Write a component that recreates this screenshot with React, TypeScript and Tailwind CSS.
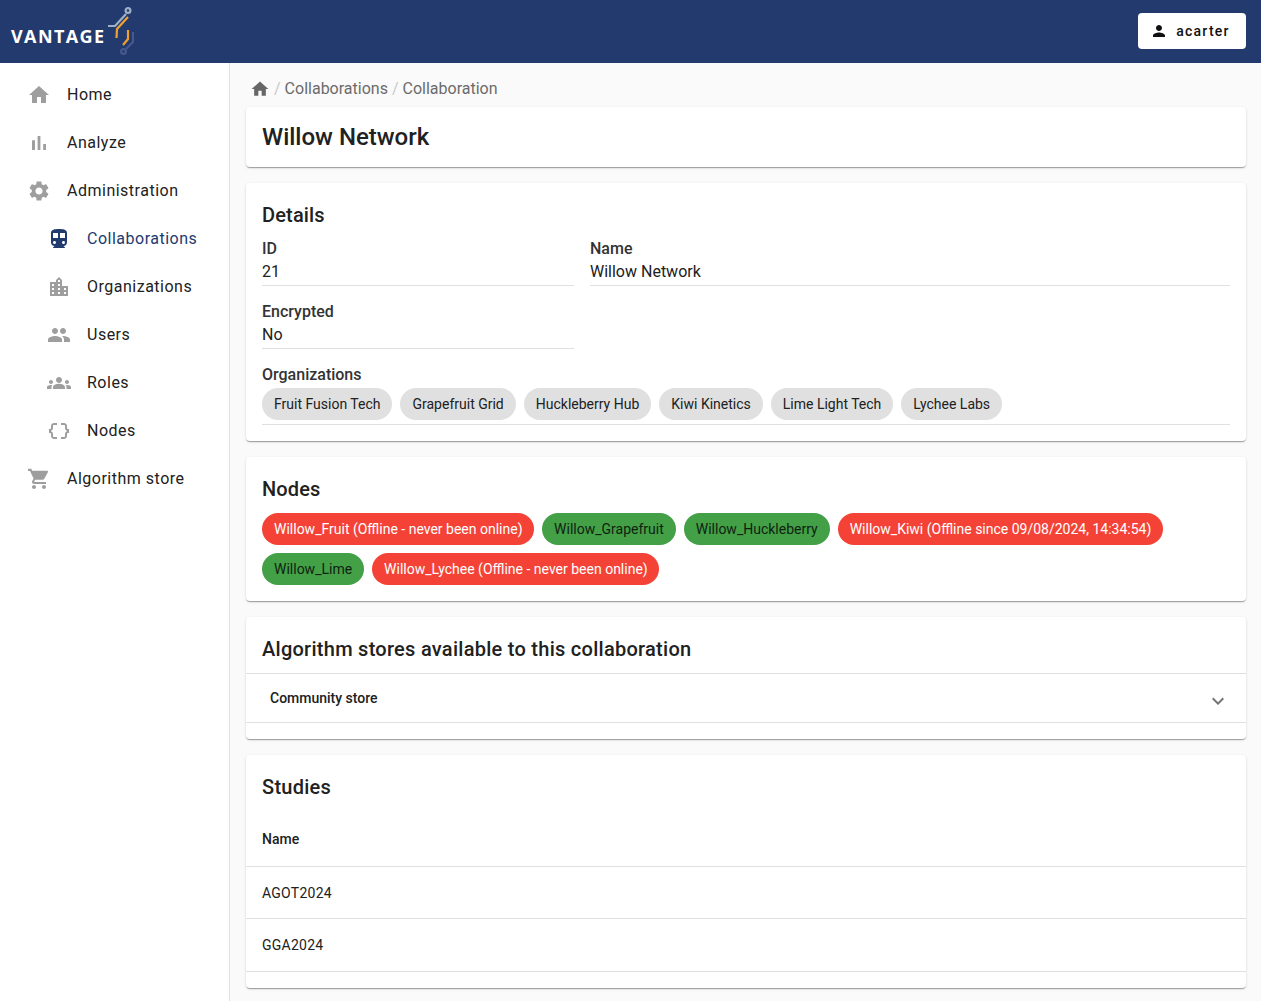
import React from "react";

const P = {
  home: "M10 20v-6h4v6h5v-8h3L12 3 2 12h3v8z",
  bar: "M5 9.2h3V19H5zM10.6 5h2.8v14h-2.8zm5.6 8H19v6h-2.8z",
  gear: "M19.14 12.94c.04-.3.06-.61.06-.94 0-.32-.02-.64-.07-.94l2.03-1.58c.18-.14.23-.41.12-.61l-1.92-3.32c-.12-.22-.37-.29-.59-.22l-2.39.96c-.5-.38-1.03-.7-1.62-.94l-.36-2.54c-.04-.24-.24-.41-.48-.41h-3.84c-.24 0-.43.17-.47.41l-.36 2.54c-.59.24-1.13.57-1.62.94l-2.39-.96c-.22-.08-.47 0-.59.22L2.74 8.87c-.12.21-.08.47.12.61l2.03 1.58c-.05.3-.09.63-.09.94s.02.64.07.94l-2.03 1.58c-.18.14-.23.41-.12.61l1.92 3.32c.12.22.37.29.59.22l2.39-.96c.5.38 1.03.7 1.62.94l.36 2.54c.05.24.24.41.48.41h3.84c.24 0 .44-.17.47-.41l.36-2.54c.59-.24 1.13-.56 1.62-.94l2.39.96c.22.08.47 0 .59-.22l1.92-3.32c.12-.22.07-.47-.12-.61l-2.01-1.58zM12 15.6c-1.98 0-3.6-1.62-3.6-3.6s1.62-3.6 3.6-3.6 3.6 1.62 3.6 3.6-1.62 3.6-3.6 3.6z",
  train: "M12 2c-4.42 0-8 .5-8 4v9.5C4 17.43 5.57 19 7.5 19L6 20.5v.5h12v-.5L16.5 19c1.93 0 3.5-1.57 3.5-3.5V6c0-3.5-3.58-4-8-4zM7.5 17c-.83 0-1.5-.67-1.5-1.5S6.67 14 7.5 14s1.5.67 1.5 1.5S8.33 17 7.5 17zm3.5-6H6V6h5v5zm5.5 6c-.83 0-1.5-.67-1.5-1.5s.67-1.5 1.5-1.5 1.5.67 1.5 1.5-.67 1.5-1.5 1.5zm1.5-6h-5V6h5v5z",
  city: "M15 11V5l-3-3-3 3v2H3v14h18V11h-6zm-8 8H5v-2h2v2zm0-4H5v-2h2v2zm0-4H5V9h2v2zm6 8h-2v-2h2v2zm0-4h-2v-2h2v2zm0-4h-2V9h2v2zm0-4h-2V5h2v2zm6 12h-2v-2h2v2zm0-4h-2v-2h2v2z",
  people: "M16 11c1.66 0 2.99-1.34 2.99-3S17.66 5 16 5c-1.66 0-3 1.34-3 3s1.34 3 3 3zm-8 0c1.66 0 2.99-1.34 2.99-3S9.66 5 8 5C6.34 5 5 6.34 5 8s1.34 3 3 3zm0 2c-2.33 0-7 1.17-7 3.5V19h14v-2.5c0-2.33-4.67-3.5-7-3.5zm8 0c-.29 0-.62.02-.97.05 1.16.84 1.97 1.97 1.97 3.45V19h6v-2.5c0-2.33-4.67-3.5-7-3.5z",
  groups: "M12 12.75c1.63 0 3.07.39 4.24.9 1.08.48 1.76 1.56 1.76 2.73V18H6v-1.61c0-1.18.68-2.26 1.76-2.73 1.17-.52 2.61-.91 4.24-.91zM4 13c1.1 0 2-.9 2-2s-.9-2-2-2-2 .9-2 2 .9 2 2 2zm1.13 1.1c-.37-.06-.74-.1-1.13-.1-.99 0-1.93.21-2.78.58C.48 14.9 0 15.62 0 16.43V18h4.5v-1.61c0-.83.23-1.61.63-2.29zM20 13c1.1 0 2-.9 2-2s-.9-2-2-2-2 .9-2 2 .9 2 2 2zm4 3.43c0-.81-.48-1.53-1.22-1.85-.85-.37-1.79-.58-2.78-.58-.39 0-.76.04-1.13.1.4.68.63 1.46.63 2.29V18H24v-1.57zM12 6c1.66 0 3 1.34 3 3s-1.34 3-3 3-3-1.34-3-3 1.34-3 3-3z",
  braces: "M4 7v2c0 .55-.45 1-1 1H2v4h1c.55 0 1 .45 1 1v2c0 1.65 1.35 3 3 3h3v-2H7c-.55 0-1-.45-1-1v-2c0-1.3-.84-2.42-2-2.83v-.34C5.16 11.42 6 10.3 6 9V7c0-.55.45-1 1-1h3V4H7C5.35 4 4 5.35 4 7zm17 3c-.55 0-1-.45-1-1V7c0-1.65-1.35-3-3-3h-3v2h3c.55 0 1 .45 1 1v2c0 1.3.84 2.42 2 2.83v.34c-1.16.41-2 1.52-2 2.83v2c0 .55-.45 1-1 1h-3v2h3c1.65 0 3-1.35 3-3v-2c0-.55.45-1 1-1h1v-4h-1z",
  cart: "M7 18c-1.1 0-1.99.9-1.99 2S5.9 22 7 22s2-.9 2-2-.9-2-2-2zM1 2v2h2l3.6 7.59-1.35 2.45c-.16.28-.25.61-.25.96 0 1.1.9 2 2 2h12v-2H7.42c-.14 0-.25-.11-.25-.25l.03-.12.9-1.83h7.45c.75 0 1.41-.41 1.75-1.03l3.58-6.49c.08-.14.12-.31.12-.48 0-.55-.45-1-1-1H5.21l-.94-2H1zm16 16c-1.1 0-1.99.9-1.99 2s.89 2 1.99 2 2-.9 2-2-.9-2-2-2z",
  person: "M12 12c2.21 0 4-1.79 4-4s-1.79-4-4-4-4 1.79-4 4 1.79 4 4 4zm0 2c-2.67 0-8 1.34-8 4v2h16v-2c0-2.66-5.33-4-8-4z",
  expand: "M16.59 8.59 12 13.17 7.41 8.59 6 10l6 6 6-6z",
};

function Icon({ d, className }: { d: string; className: string }) {
  return (
    <svg viewBox="0 0 24 24" fill="currentColor" className={className}>
      <path d={d} />
    </svg>
  );
}

function NavItem({ icon, label, sub, active }: { icon: string; label: string; sub?: boolean; active?: boolean }) {
  return (
    <div className={`flex h-12 items-center ${sub ? "pl-[47px]" : "pl-[27px]"}`}>
      <Icon d={icon} className={`h-6 w-6 shrink-0 ${active ? "text-[#213a70]" : "text-[#9e9e9e]"}`} />
      <span className={`ml-4 text-base tracking-[0.5px] ${active ? "text-[#213a70]" : "text-[#212121]"}`}>{label}</span>
    </div>
  );
}

function Card({ className, children }: { className?: string; children: React.ReactNode }) {
  return (
    <section className={`rounded bg-white shadow-[0_2px_1px_-1px_rgba(0,0,0,0.2),0_1px_1px_0_rgba(0,0,0,0.14),0_1px_3px_0_rgba(0,0,0,0.12)] ${className ?? ""}`}>
      {children}
    </section>
  );
}

function Field({ label, value }: { label: string; value: string }) {
  return (
    <div className="border-b border-[#e0e0e0] pb-[2px]">
      <div className="h-[24px] text-base leading-[24px] font-medium text-[#333333]">{label}</div>
      <div className="h-[22px] text-base leading-[22px] text-[#212121]">{value}</div>
    </div>
  );
}

function Chip({ label, tone }: { label: string; tone: "grey" | "red" | "green" }) {
  const c =
    tone === "grey"
      ? "bg-[#e0e0e0] text-[#212121] pr-3"
      : tone === "red"
        ? "bg-[#f44336] text-white pr-[11.5px]"
        : "bg-[#43a047] text-[#0f1f10] pr-3";
  return <span className={`flex h-8 items-center rounded-full pl-3 text-sm whitespace-nowrap ${c}`}>{label}</span>;
}

const orgs = ["Fruit Fusion Tech", "Grapefruit Grid", "Huckleberry Hub", "Kiwi Kinetics", "Lime Light Tech", "Lychee Labs"];
const nodes: [string, "red" | "green"][] = [
  ["Willow_Fruit (Offline - never been online)", "red"],
  ["Willow_Grapefruit", "green"],
  ["Willow_Huckleberry", "green"],
  ["Willow_Kiwi (Offline since 09/08/2024, 14:34:54)", "red"],
  ["Willow_Lime", "green"],
  ["Willow_Lychee (Offline - never been online)", "red"],
];

export default function App() {
  return (
    <div className="flex h-screen flex-col overflow-hidden bg-[#fafafa] font-['Roboto',sans-serif] text-[#212121]">
      <header className="flex h-[63px] shrink-0 items-start justify-between bg-[#223a6e] pr-[15px] pl-[11px]">
        <div className="flex items-start pt-[5px]">
          <span className="mt-[18px] w-[95px] font-['Open_Sans',sans-serif] text-[18px] leading-[26px] font-bold tracking-[1.4px] whitespace-nowrap text-white">VANTAGE</span>
          <svg viewBox="0 0 30 56" className="h-[56px] w-[30px]" fill="none" strokeWidth="2.2">
            <path d="M2 21 H9 L20 9" stroke="#9db0c6" />
            <circle cx="22" cy="5.5" r="2.4" stroke="#9db0c6" />
            <path d="M22 12 L11 24 L10.5 33" stroke="#f0a030" />
            <path d="M22 25 V34 L17 40" stroke="#f0a030" />
            <path d="M27 27 V37 L20 44" stroke="#47578f" />
            <circle cx="17.5" cy="46.5" r="2.4" stroke="#47578f" />
          </svg>
        </div>
        <button className="mt-[13px] flex h-9 w-[108px] items-center justify-center rounded bg-white pr-[4px] text-sm font-medium tracking-[1.25px] text-[#111111]">
          <Icon d={P.person} className="mr-2 h-[18px] w-[18px]" />
          acarter
        </button>
      </header>
      <div className="flex min-h-0 flex-1">
        <nav className="w-[230px] shrink-0 border-r border-[#e0e0e0] bg-white pt-[8px]">
          <NavItem icon={P.home} label="Home" />
          <NavItem icon={P.bar} label="Analyze" />
          <NavItem icon={P.gear} label="Administration" />
          <NavItem icon={P.train} label="Collaborations" sub active />
          <NavItem icon={P.city} label="Organizations" sub />
          <NavItem icon={P.people} label="Users" sub />
          <NavItem icon={P.groups} label="Roles" sub />
          <NavItem icon={P.braces} label="Nodes" sub />
          <NavItem icon={P.cart} label="Algorithm store" />
        </nav>
        <main className="min-w-0 flex-1 pr-[15px] pl-4">
          <div className="flex h-[44px] items-center pt-[7px] pl-[4px] text-base text-[#6b6b6b]">
            <Icon d={P.home} className="h-5 w-5 text-[#666666]" />
            <span className="mr-[4px] ml-[4px] text-[#c9c9c9]">/</span>
            <span>Collaborations</span>
            <span className="mx-[4px] text-[#c9c9c9]">/</span>
            <span>Collaboration</span>
          </div>
          <div className="flex flex-col gap-4">
            <Card className="flex h-[60px] items-center px-4">
              <h1 className="text-2xl font-medium text-[#212121]">Willow Network</h1>
            </Card>
            <Card className="h-[258px] px-4 pt-[20px]">
              <h2 className="h-[24px] text-xl leading-[24px] font-medium tracking-[0.15px]">Details</h2>
              <div className="mt-[10px] grid grid-cols-[312px_1fr] gap-x-4 gap-y-[14px]">
                <Field label="ID" value="21" />
                <Field label="Name" value="Willow Network" />
                <Field label="Encrypted" value="No" />
                <div />
              </div>
              <div className="mt-[14px] border-b border-[#e0e0e0] pb-1">
                <div className="h-[25px] text-base leading-[24px] font-medium text-[#333333]">Organizations</div>
                <div className="flex gap-2">
                  {orgs.map((o) => (
                    <Chip key={o} label={o} tone="grey" />
                  ))}
                </div>
              </div>
            </Card>
            <Card className="h-[144px] px-4 pt-[20px]">
              <h2 className="h-[24px] text-xl leading-[24px] font-medium tracking-[0.15px]">Nodes</h2>
              <div className="mt-[12px] flex flex-wrap gap-2">
                {nodes.map(([n, t]) => (
                  <Chip key={n} label={n} tone={t} />
                ))}
              </div>
            </Card>
            <Card className="h-[122px]">
              <h2 className="flex h-[56px] items-center px-4 pt-[8px] text-xl font-medium tracking-[0.27px]">Algorithm stores available to this collaboration</h2>
              <div className="flex h-[50px] items-center justify-between border-y border-[#e0e0e0] pr-4 pl-6">
                <span className="text-sm font-medium text-[#212121]">Community store</span>
                <Icon d={P.expand} className="mt-[5px] h-6 w-6 text-[#757575]" />
              </div>
            </Card>
            <Card className="h-[233px]">
              <h2 className="flex h-[64px] items-center px-4 text-xl font-medium tracking-[0.27px]">Studies</h2>
              <div className="flex h-[48px] items-center border-b border-[#e0e0e0] px-4 pb-[8px] text-sm font-medium">Name</div>
              <div className="flex h-[52px] items-center border-b border-[#e0e0e0] px-4 text-sm tracking-[0.25px]">AGOT2024</div>
              <div className="flex h-[53px] items-center border-b border-[#e0e0e0] px-4 text-sm tracking-[0.25px]">GGA2024</div>
            </Card>
          </div>
        </main>
      </div>
    </div>
  );
}
